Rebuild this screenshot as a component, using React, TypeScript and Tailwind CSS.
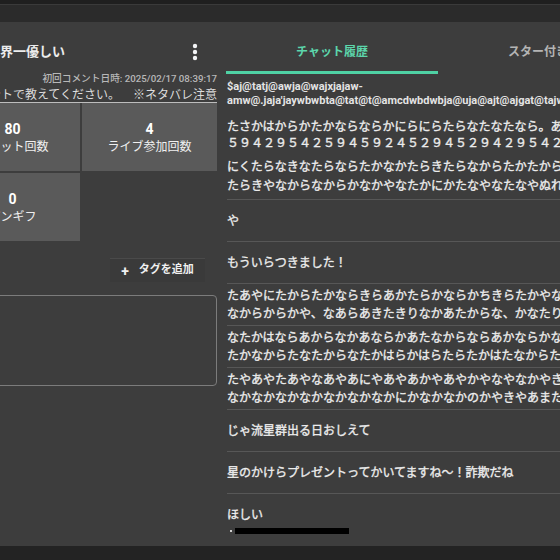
import React from 'react';

const font = { fontFamily: 'Roboto, "Noto Sans CJK JP", sans-serif' };

const stats = [
  { value: '80', label: 'チャット回数' },
  { value: '4', label: 'ライブ参加回数' },
  { value: '0', label: 'ピンギフ' },
];

const messages: string[][] = [
  ['もういらつきました！'],
  [
    'たあやにたからたかならきらあかたらかならかちきらたかやなからかや',
    'なからからかや、なあらあきたきりなかあたからな、かなたりなかあたからな',
  ],
  [
    'なたかはならあからなかあならかあたなからならあかならかなからたか',
    'たかなからたなたからなたかはらかはらたらたかはたなからたなからたか',
  ],
  [
    'たやあやたあやなあやあにやあやあかやあやかやなやなかやきやあやかや',
    'なかなかなかなかなかなかなかにかなかなかのかやきやあまたかなかなか',
  ],
  ['じゃ流星群出る日おしえて'],
  ['星のかけらプレゼントってかいてますね～！詐欺だね'],
];

function Kebab() {
  return (
    <svg width="6" height="18" viewBox="0 0 6 18" className="text-gray-100">
      <circle cx="3" cy="3" r="2.2" fill="currentColor" />
      <circle cx="3" cy="9" r="2.2" fill="currentColor" />
      <circle cx="3" cy="15" r="2.2" fill="currentColor" />
    </svg>
  );
}

export default function App() {
  return (
    <div className="w-[560px] h-[560px] flex flex-col bg-[#3d3d3d] overflow-hidden" style={font}>
      <div className="h-[22px] flex flex-col shrink-0">
        <div className="h-[5px] bg-[#1f1f1f] border-b border-[#3a3a3a]" />
        <div className="flex-1 bg-[#2b2b2b]" />
      </div>

      <div className="flex-1 flex gap-2 min-h-0">
        {/* left panel, scrolled horizontally */}
        <div className="w-[218px] shrink-0 overflow-hidden">
          <div className="w-[290px] ml-[-72px] flex flex-col">
            <div className="mt-5 h-5 flex items-center justify-between pr-5">
              <span className="pl-[59px] text-[13px] font-bold text-[#ececec] whitespace-nowrap">世界一優しい</span>
              <Kebab />
            </div>
            <div className="mt-[10px] h-[14px] text-[9.7px] leading-[14px] font-medium text-[#b8b8b8] text-right pr-[1px] whitespace-nowrap">
              初回コメント日時: 2025/02/17 08:39:17
            </div>
            <div className="mt-[2px] flex justify-end pr-[1px]">
              <span className="flex text-[12px] leading-[14px] text-[#dcdcdc] whitespace-nowrap border-b border-[#bdbdbd]">
                <span>コメントで教えてください。</span>
                <span className="ml-[13px]">※ネタバレ注意</span>
              </span>
            </div>
            <div className="ml-[17px] w-[272px] grid grid-cols-2 gap-[2px]">
              {stats.map((s) => (
                <div key={s.label} className="h-[68px] bg-[#5a5a5a] flex flex-col items-center justify-center">
                  <span className="text-[14px] leading-5 font-bold text-white">{s.value}</span>
                  <span className="text-[12px] leading-4 text-[#f0f0f0] whitespace-nowrap">{s.label}</span>
                </div>
              ))}
            </div>
            <div className="mt-[17px] flex justify-end pr-[13px]">
              <div className="w-[95px] h-6 bg-[#3a3a3a] border-t border-[#4a4a4a] flex items-center justify-center gap-[10px] text-[11px] font-bold text-[#f0f0f0]">
                <span className="text-[14px] leading-none">+</span>
                <span>タグを追加</span>
              </div>
            </div>
            <div className="mt-[13px] ml-[17px] w-[272px] h-[91px] border border-[#7c7c7c] rounded-[4px]" />
          </div>
        </div>

        {/* right panel */}
        <div className="flex-1 min-w-0 overflow-hidden flex flex-col">
          <div className="mt-2 h-[44px] flex shrink-0">
            <div className="w-[212px] shrink-0 flex items-center justify-center border-b-[3px] border-[#4fd1a4] pt-[3px]">
              <span className="text-[12px] font-bold text-[#5cd6ab] whitespace-nowrap">チャット履歴</span>
            </div>
            <div className="w-[212px] shrink-0 flex items-center pl-[70px]">
              <span className="text-[12px] font-bold text-[#b4b4b4] whitespace-nowrap">スター付きチャット</span>
            </div>
          </div>

          <div className="pl-[1px] flex flex-col text-[#ececec] whitespace-nowrap [-webkit-text-stroke:0.35px_#ececec]">
            <div className="pt-[6px] text-[11px] leading-[14px] font-bold text-[#e4e4e4] [-webkit-text-stroke:0px]">
              <div className="h-[14px]">$aj@tatj@awja@wajxjajaw-</div>
              <div className="h-[14px]">amw@.jaja'jaywbwbta@tat@t@amcdwbdwbja@uja@ajt@ajgat@tajwa</div>
            </div>
            <div className="mt-[11px] text-[12px]">
              <div className="h-4 leading-4">たさかはからかたかならならかにらにらたらなたなたなら。あたかなら</div>
              <div className="h-4 leading-4">５９４２９５４２５９４５９２４５２９４５２９４２９５４２５９４</div>
              <div className="mt-[7px] h-[19px] leading-[19px]">にくたらなきなたらならたかなかたらきたらなからたかたからなかやた</div>
              <div className="h-[19px] leading-[19px] mb-[3px]">たらきやなからなからかなかやなたかにかたなやなたなやぬれたかなや</div>
            </div>
            <div className="h-[42px] border-t border-[#575757] flex items-center text-[12px]">や</div>
            {messages.map((m, i) => (
              <div key={i} className="h-[42px] border-t border-[#575757] flex flex-col justify-center text-[12px] leading-[18px]">
                {m.map((line, j) => (
                  <div key={j}>{line}</div>
                ))}
              </div>
            ))}
            <div className="border-t border-[#575757] pt-[13px] text-[12px] leading-4">
              <div>ほしい</div>
              <div className="flex items-center gap-[3px] ml-[3px] mt-[5px]">
                <span className="w-[2px] h-[2px] bg-[#cfcfcf]" />
                <span className="w-[114px] h-[6px] bg-black" />
              </div>
            </div>
          </div>
        </div>
      </div>

      <div className="h-[14px] bg-[#232323] shrink-0" />
    </div>
  );
}
